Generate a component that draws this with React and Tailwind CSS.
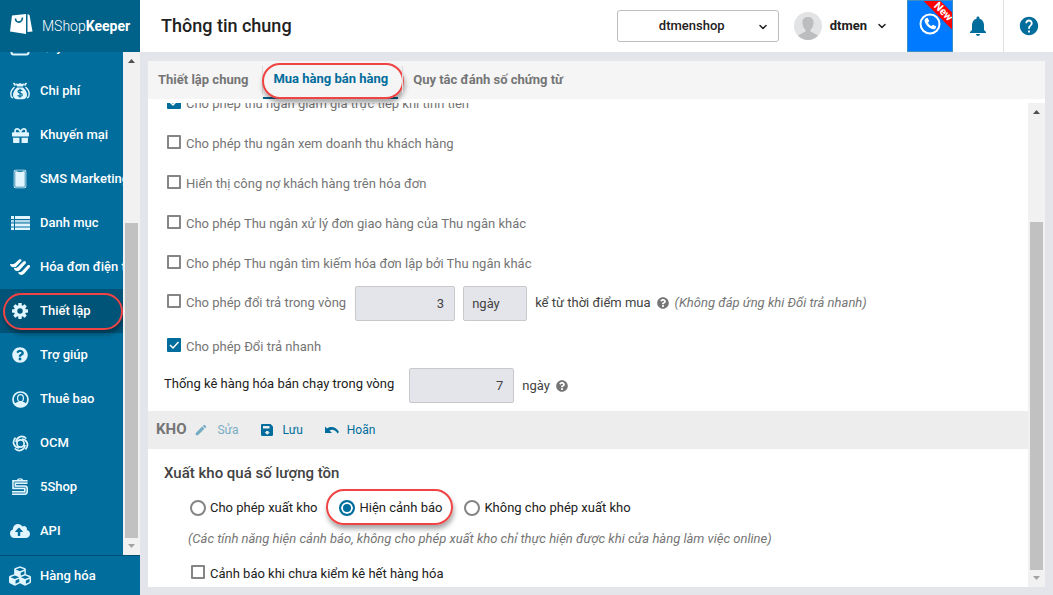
import React, { useState } from 'react';
import { FaGift, FaQuestionCircle, FaCloudUploadAlt, FaCubes } from 'react-icons/fa';
import { MdNotifications, MdHelp, MdEdit } from 'react-icons/md';
import { FiChevronDown } from 'react-icons/fi';

const CashIcon = () => (
    <svg width="20" height="20" viewBox="0 0 20 20" fill="none" stroke="currentColor" strokeWidth="2">
        <rect x="4" y="5" width="12" height="7" />
        <rect x="1.5" y="12" width="17" height="5.5" rx="2" />
    </svg>
);

const MoneyBagIcon = () => (
    <svg width="20" height="18" viewBox="0 0 20 18">
        <path d="M5.500 1.200 8 2l2-1 2 1 2.500-.8L13 4.500H7z" fill="currentColor" />
        <path d="M3.500 1 5.500 3.500M16.500 1 14.500 3.500" stroke="currentColor" strokeWidth="1.800" />
        <path d="M7 5.500h6c2.500 2 4 5 4 7.500 0 3-2 4.200-4.500 4.200h-5C5 17.200 3 16 3 13c0-2.500 1.500-5.500 4-7.500z" fill="currentColor" />
        <path d="M4.500 5C2.200 7 .8 9.500.8 12c0 2 .8 3.500 2 4.200M15.500 5c2.300 2 3.700 4.500 3.700 7 0 2-.8 3.500-2 4.200" fill="none" stroke="currentColor" strokeWidth="1.400" />
        <path d="M12.300 8.800C11.800 7.800 8 7.600 8 9.600c0 2 4.300 1.200 4.300 3.200 0 2-4 1.800-4.600.5M10 6.800v9" fill="none" stroke="#006d9c" strokeWidth="1.200" />
    </svg>
);

const PhoneIcon = () => (
    <svg width="14" height="20" viewBox="0 0 14 20">
        <rect x=".7" y=".7" width="12.600" height="18.600" rx="1.800" fill="currentColor" />
        <rect x="1.800" y="1.800" width="10.400" height="16.400" rx=".8" fill="none" stroke="#006d9c" strokeWidth=".7" />
        <path d="M4.500 1.800h5v1h-5z" fill="#006d9c" />
    </svg>
);

const ListIcon = () => (
    <svg width="19" height="14" viewBox="0 0 19 14" fill="currentColor">
        <path d="M0 0h3v3H0zM4 0h15v3H4zM0 7.500h3v3H0zM4 7.500h15v3H4zM0 11.500h3V14H0zM4 11.500h15V14H4z" />
        <path d="M0 4h3v2.500H0zM4 4h15v2.500H4z" opacity=".8" />
    </svg>
);

const InvoiceIcon = () => (
    <svg width="20" height="17" viewBox="0 0 20 17" fill="#fff" stroke="#fff" strokeWidth="1.100" strokeLinejoin="round">
        <path d="M.6 5.500c2 .8 3.500.2 5-1L9.500 1c.9-.4 2 0 1.200.8L6 7C4.500 8.300 1.500 8 .6 5.500z" />
        <path d="M4.500 9.500c1.700.5 2.800-.2 4-1.300l5.300-5.300c1-.6 2.200.2 1.400 1.200l-5.700 6.400c-1.700 1.700-4.300 1-5-1z" />
        <path d="M8.800 13.700c1.500.4 2.700-.2 3.800-1.300l5.300-5.600c1-.7 2.100.1 1.400 1.200l-5.600 6.400c-1.600 1.500-4.200 1.200-4.900-.7z" />
    </svg>
);

const GearIcon = () => (
    <svg width="16" height="16" viewBox="0 0 16 16">
        <g fill="currentColor">
            <rect x="6.300" y="0" width="3.400" height="16" rx=".6" />
            <rect x="6.300" y="0" width="3.400" height="16" rx=".6" transform="rotate(45 8 8)" />
            <rect x="6.300" y="0" width="3.400" height="16" rx=".6" transform="rotate(90 8 8)" />
            <rect x="6.300" y="0" width="3.400" height="16" rx=".6" transform="rotate(135 8 8)" />
            <circle cx="8" cy="8" r="6" />
        </g>
        <circle cx="8" cy="8" r="2.700" fill="#005478" />
    </svg>
);

const UserIcon = () => (
    <svg width="17" height="17" viewBox="0 0 17 17">
        <circle cx="8.500" cy="8.500" r="7.500" fill="none" stroke="currentColor" strokeWidth="1.700" />
        <path d="M2.500 13c1-1.300 2.500-1.800 4-2.200h4c1.500.4 3 .9 4 2.200-1.500 2.200-3.500 3.300-6 3.300S4 15.200 2.500 13z" fill="currentColor" />
        <ellipse cx="8.500" cy="7.200" rx="2.900" ry="3.500" fill="#006d9c" stroke="currentColor" strokeWidth="1.200" />
    </svg>
);

const SwirlIcon = () => (
    <svg width="17" height="17" viewBox="0 0 17 17" fill="none" stroke="currentColor" strokeWidth="1.700">
        <circle cx="8.500" cy="8.500" r="3.600" />
        <path d="M4 7C4.500 2 10 -.5 14.300 3.500" />
        <path d="M4 7C4.500 2 10 -.5 14.300 3.500" transform="rotate(90 8.500 8.500)" />
        <path d="M4 7C4.500 2 10 -.5 14.300 3.500" transform="rotate(180 8.500 8.500)" />
        <path d="M4 7C4.500 2 10 -.5 14.300 3.500" transform="rotate(270 8.500 8.500)" />
    </svg>
);

const FiveShopIcon = () => (
    <svg width="18" height="18" viewBox="0 0 18 18" fill="none" stroke="currentColor">
        <path d="M16.500 4H3.200v5.300h10.500c.9 0 1.300.5 1.300 1.300v3c0 .9-.5 1.400-1.400 1.400H1" strokeWidth="4" />
        <path d="M16.500 4H3.200v5.300h10.500c.9 0 1.300.5 1.300 1.300v3c0 .9-.5 1.400-1.400 1.400H1" stroke="#006d9c" strokeWidth=".8" />
        <path d="M6.500 2.500C6.500.3 11.500.3 11.500 2.500" strokeWidth="1.300" />
    </svg>
);

const LogoIcon = () => (
    <svg width="23" height="20" viewBox="0 0 23 20">
        <path d="M2 1.500 16 0v20L0 17.500z" fill="#fff" />
        <path d="M17.500 0 19.500 1 22.500 17.500 17.500 18z" fill="#fff" />
        <path d="M5.500 4.500c0 5 6.500 5 7-1" fill="none" stroke="#006189" strokeWidth="1.600" />
    </svg>
);

const SaveIcon = () => (
    <svg width="12" height="12" viewBox="0 0 12 12">
        <path d="M1.200 0H9.500L12 2.500v8.300c0 .7-.5 1.200-1.200 1.200H1.200C.5 12 0 11.500 0 10.800V1.200C0 .5.5 0 1.200 0z" fill="currentColor" />
        <path d="M2 2h6.500v2.500H2zM5 7h2.500v1.200H9L6.200 10.800 3.500 8.200H5z" fill="#ededed" />
    </svg>
);

const UndoIcon = () => (
    <svg width="14" height="8" viewBox="0 0 14 8">
        <path d="M0 .5 2 2.500C6 0 11 .5 14 6l-1.500 1.500C10.500 4 7.500 3 4.500 4.500L7 7H0z" fill="currentColor" />
    </svg>
);

const PhoneCallIcon = () => (
    <svg width="22" height="22" viewBox="0 0 22 22">
        <circle cx="11" cy="11" r="9.500" fill="none" stroke="#fff" strokeWidth="2" />
        <path d="M6.500 5.500 8.500 4.800 10.300 8 9 9.500c.6 1.700 1.800 2.900 3.500 3.500l1.500-1.300 3.200 1.800-.8 2.200c-1 1-2.800.8-5-.4-2.700-1.500-4.600-3.700-5.500-6.300-.5-1.500-.2-2.800.6-3.500z" fill="#fff" />
    </svg>
);

const Avatar = () => (
    <svg width="28" height="28" viewBox="0 0 28 28">
        <circle cx="14" cy="14" r="14" fill="#e2e3e4" />
        <path d="M14 5c-4 0-6 2.500-5.500 6.500.3 3 1.500 5 3 6.200v1.800L4 23.500C6.500 26.300 10 28 14 28s7.500-1.700 10-4.500l-7.500-4v-1.800c1.500-1.200 2.700-3.200 3-6.200C20 7.500 18 5 14 5z" fill="#bcbdbf" />
    </svg>
);

const menu = [
    { name: 'Quỹ', icon: <CashIcon /> },
    { name: 'Chi phí', icon: <MoneyBagIcon /> },
    { name: 'Khuyến mại', icon: <FaGift size={17} /> },
    { name: 'SMS Marketing', icon: <PhoneIcon /> },
    { name: 'Danh mục', icon: <ListIcon /> },
    { name: 'Hóa đơn điện tử', icon: <InvoiceIcon /> },
    { name: 'Thiết lập', icon: <GearIcon />, active: true },
    { name: 'Trợ giúp', icon: <FaQuestionCircle size={16} /> },
    { name: 'Thuê bao', icon: <UserIcon /> },
    { name: 'OCM', icon: <SwirlIcon /> },
    { name: '5Shop', icon: <FiveShopIcon /> },
    { name: 'API', icon: <FaCloudUploadAlt size={20} /> },
];

const tabs = ['Thiết lập chung', 'Mua hàng bán hàng', 'Quy tắc đánh số chứng từ'];

const options = [
    { id: 'discount', label: 'Cho phép thu ngân giảm giá trực tiếp khi tính tiền', checked: true },
    { id: 'revenue', label: 'Cho phép thu ngân xem doanh thu khách hàng' },
    { id: 'debt', label: 'Hiển thị công nợ khách hàng trên hóa đơn' },
    { id: 'delivery', label: 'Cho phép Thu ngân xử lý đơn giao hàng của Thu ngân khác' },
    { id: 'search', label: 'Cho phép Thu ngân tìm kiếm hóa đơn lập bởi Thu ngân khác' },
];

const exportModes = ['Cho phép xuất kho', 'Hiện cảnh báo', 'Không cho phép xuất kho'];

// red rounded outline around the parent
const Highlight = ({ className }) => (
    <span className={`absolute border-2 border-[#f04343] rounded-full shadow-[1px_4px_5px_rgba(0,0,0,0.35)] pointer-events-none ${className}`} />
);

const Checkbox = ({ id, label, checked, dark }) => (
    <div className="flex items-center gap-[5px]">
        <span className="relative flex shrink-0 -mt-1">
            <input
                id={id}
                type="checkbox"
                defaultChecked={checked}
                className="peer appearance-none w-[14px] h-[14px] border-2 border-[#858585] checked:border-[#006d9c] checked:bg-[#006d9c] rounded-[1px]"
            />
            <svg className="absolute left-0 top-0 hidden peer-checked:block pointer-events-none" width="14" height="14" viewBox="0 0 14 14">
                <path d="M3 7l3 3 5.500-6" fill="none" stroke="#fff" strokeWidth="1.500" />
            </svg>
        </span>
        <label htmlFor={id} className={dark ? 'text-[#212121]' : 'text-[#757575]'}>{label}</label>
    </div>
);

const ScrollBar = ({ top }) => (
    <div className="flex flex-col items-center w-[17px] shrink-0 bg-[#f1f1f1]">
        <svg className="mt-[7px] mb-[6px] shrink-0" width="7" height="4" viewBox="0 0 7 4"><path d="M0 4 3.500 0 7 4z" fill="#505050" /></svg>
        <div className={`w-[13px] flex-1 bg-[#c1c1c1] ${top}`} />
        <svg className="mt-[6px] mb-[7px] shrink-0" width="7" height="4" viewBox="0 0 7 4"><path d="M0 0 3.500 4 7 0z" fill="#a3a3a3" /></svg>
    </div>
);

const Sidebar = () => (
    <aside className="w-[140px] shrink-0 flex flex-col bg-[#006d9c] text-white text-[13px] font-medium">
        <div className="h-[52px] shrink-0 flex items-center bg-[#006189] pl-[10px] pb-1 gap-[9px]">
            <LogoIcon />
            <span className="text-sm font-light whitespace-nowrap pt-1">MShop<b className="font-bold">Keeper</b></span>
        </div>
        <div className="flex flex-1 min-h-0">
            <nav className="flex-1 min-w-0 overflow-hidden">
                <ul className="-mt-[27px]">
                    {menu.map((item) => (
                        <li key={item.name} className={`relative h-11 ${item.active ? 'bg-[#005478]' : ''}`}>
                            <a href="#" className="flex items-center h-full whitespace-nowrap">
                                <span className="w-10 shrink-0 flex justify-center text-[#e1f5fe]">{item.icon}</span>
                                {item.name}
                            </a>
                            {item.active && <Highlight className="left-[3px] right-0 top-1 h-[37px]" />}
                        </li>
                    ))}
                </ul>
            </nav>
            <ScrollBar top="mt-[154px]" />
        </div>
        <a href="#" className="h-10 shrink-0 flex items-center border-t border-[#004f73]">
            <span className="w-10 flex justify-center text-[#e1f5fe]"><FaCubes size={22} /></span>
            Hàng hóa
        </a>
    </aside>
);

const Header = () => (
    <header className="h-[52px] shrink-0 flex items-center bg-white">
        <h1 className="flex-1 pl-[21px] text-lg font-medium text-[#212121]">Thông tin chung</h1>
        <div className="relative">
            <select aria-label="Cửa hàng" className="appearance-none w-[162px] h-8 pr-3 border border-[#bdbdbd] rounded-[3px] bg-white text-[13px] font-medium text-[#212121] [text-align-last:center]">
                <option>dtmenshop</option>
            </select>
            <FiChevronDown className="absolute right-[10px] top-[11px] text-[#212121] pointer-events-none" size={12} strokeWidth={3} />
        </div>
        <button className="flex items-center ml-[15px] mr-[19px] text-[13px] font-bold text-[#212121]">
            <Avatar />
            <span className="ml-2 mr-[9px]">dtmen</span>
            <FiChevronDown size={12} strokeWidth={3} />
        </button>
        <button aria-label="Gọi điện" className="relative overflow-hidden w-[46px] h-full flex justify-center pt-3 bg-[#007bff] border border-[#3c8fc4]">
            <PhoneCallIcon />
            <span className="absolute -right-[18px] top-[5px] w-[54px] rotate-45 bg-[#fe0000] text-white text-[11px] leading-3 font-bold text-center">New</span>
        </button>
        <button aria-label="Thông báo" className="w-[51px] h-full flex items-center justify-center border-r border-[#e0e0e0] text-[#006d9c]">
            <MdNotifications size={24} />
        </button>
        <button aria-label="Trợ giúp" className="w-[49px] h-full flex items-center justify-center text-[#006d9c]">
            <MdHelp size={22} />
        </button>
    </header>
);

const Settings = () => {
    const [tab, setTab] = useState(1);
    const [mode, setMode] = useState(1);

    return (
        <div className="flex-1 min-h-0 flex flex-col mx-2 mt-[9px] mb-2 bg-white">
            <div className="h-[38px] shrink-0 flex gap-1 bg-[#f5f5f5]">
                {tabs.map((name, i) => (
                    <div key={name} className="relative flex">
                        {i > 0 && <span className="self-center h-7 w-px bg-[#dcdcdc]" />}
                        <button
                            onClick={() => setTab(i)}
                            className={`px-[10px] text-[13px] font-bold ${tab === i ? 'text-[#006d9c] border-b-2 border-[#006189]' : 'text-[#757575]'}`}
                        >
                            {name}
                        </button>
                        {tab === i && <Highlight className="left-0 -right-[6px] top-[2px] h-9" />}
                    </div>
                ))}
            </div>

            <div className="flex flex-1 min-h-0 mt-1">
                <div className="flex-1 min-w-0 overflow-hidden">
                    <div className="-mt-[19px] pl-[19px]">
                        {options.map((o) => (
                            <div key={o.id} className="h-10 flex items-center">
                                <Checkbox {...o} />
                            </div>
                        ))}
                        <div className="h-[38px] flex items-center whitespace-nowrap text-[#424242]">
                            <Checkbox id="return" label="Cho phép đổi trả trong vòng" />
                            <input aria-label="Số ngày đổi trả" defaultValue="3" className="w-[100px] h-[35px] ml-[9px] px-[10px] text-right border border-[#c9c9cb] rounded-[2px] bg-[#e4e5eb]" />
                            <input aria-label="Đơn vị" defaultValue="ngày" className="w-16 h-[35px] mx-2 px-2 border border-[#c9c9cb] rounded-[2px] bg-[#e4e5eb]" />
                            <span>kể từ thời điểm mua</span>
                            <FaQuestionCircle className="mx-[6px] text-[#757575]" size={12} />
                            <i className="text-[#757575]">(Không đáp ứng khi Đổi trả nhanh)</i>
                        </div>
                        <div className="h-[46px] pt-1 flex items-center">
                            <Checkbox id="quick" label="Cho phép Đổi trả nhanh" checked />
                        </div>
                    </div>
                    <div className="flex items-center mb-2 pl-4 text-[#424242]">
                        <label htmlFor="days" className="pb-1 text-[#212121]">Thống kê hàng hóa bán chạy trong vòng</label>
                        <input id="days" defaultValue="7" className="w-[105px] h-[35px] ml-[15px] mr-2 px-[10px] text-right border border-[#c9c9cb] rounded-[2px] bg-[#e4e5eb]" />
                        <span>ngày</span>
                        <FaQuestionCircle className="ml-[6px] text-[#757575]" size={12} />
                    </div>

                    <div className="h-[38px] flex items-center pl-2 bg-[#ededed] text-[#006d9c] text-xs">
                        <h2 className="text-[15px] font-bold text-[#757575]">KHO</h2>
                        <button disabled className="flex items-center gap-[9px] ml-2 opacity-50"><MdEdit size={14} />Sửa</button>
                        <button className="flex items-center gap-[10px] ml-[22px]"><SaveIcon />Lưu</button>
                        <button className="flex items-center gap-2 ml-[22px]"><UndoIcon />Hoãn</button>
                    </div>

                    <div className="pl-4">
                        <h3 className="mt-3 text-[15px] leading-6 font-medium text-[#424242]">Xuất kho quá số lượng tồn</h3>
                        <div className="mt-2 h-[30px] pl-[26px] flex items-center gap-[22px] text-[#212121]">
                            {exportModes.map((name, i) => (
                                <label key={name} className="relative flex items-center gap-1">
                                    <input
                                        type="radio"
                                        name="mode"
                                        checked={mode === i}
                                        onChange={() => setMode(i)}
                                        className="appearance-none w-4 h-4 rounded-full border-2 border-[#858585] checked:border-[#006d9c] checked:bg-[#006d9c] checked:shadow-[inset_0_0_0_2px_#fff]"
                                    />
                                    {name}
                                    {mode === i && <Highlight className="-left-[13px] -right-[11px] -top-[9px] h-9" />}
                                </label>
                            ))}
                        </div>
                        <p className="pl-6 leading-8 italic text-[#757575]">(Các tính năng hiện cảnh báo, không cho phép xuất kho chỉ thực hiện được khi cửa hàng làm việc online)</p>
                        <div className="h-[38px] pl-[27px] flex items-center">
                            <Checkbox id="stocktake" label="Cảnh báo khi chưa kiểm kê hết hàng hóa" dark />
                        </div>
                    </div>
                </div>
                <ScrollBar top="mt-[102px]" />
            </div>
        </div>
    );
};

const App = () => (
    <div className="flex h-screen overflow-hidden bg-[#e4e5eb] font-[Roboto,sans-serif] text-[13px]">
        <Sidebar />
        <div className="flex-1 min-w-0 flex flex-col">
            <Header />
            <Settings />
        </div>
    </div>
);

export default App;
